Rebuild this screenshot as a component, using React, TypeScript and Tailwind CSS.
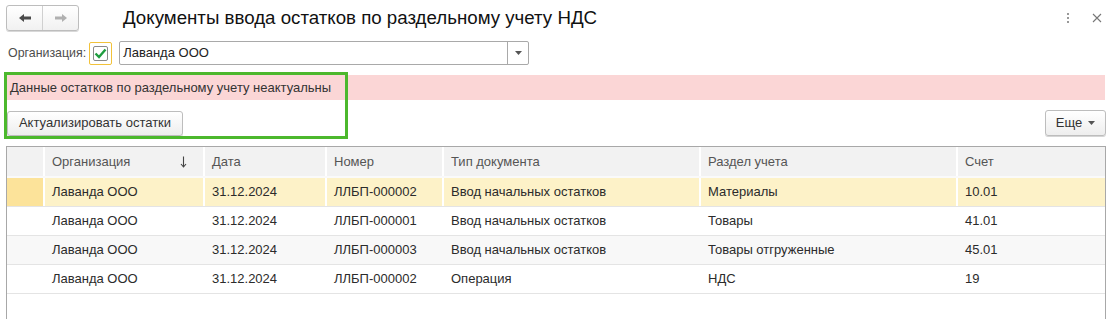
import React from "react"

const cols = [
  { title: "", w: "w-[36px]" },
  { title: "Организация", w: "w-[160px]", sort: true },
  { title: "Дата", w: "w-[122px]" },
  { title: "Номер", w: "w-[117px]" },
  { title: "Тип документа", w: "w-[257px]" },
  { title: "Раздел учета", w: "w-[257px]" },
  { title: "Счет", w: "w-[148px]" },
]

const rows = [
  ["Лаванда ООО", "31.12.2024", "ЛЛБП-000002", "Ввод начальных остатков", "Материалы", "10.01"],
  ["Лаванда ООО", "31.12.2024", "ЛЛБП-000001", "Ввод начальных остатков", "Товары", "41.01"],
  ["Лаванда ООО", "31.12.2024", "ЛЛБП-000003", "Ввод начальных остатков", "Товары отгруженные", "45.01"],
  ["Лаванда ООО", "31.12.2024", "ЛЛБП-000002", "Операция", "НДС", "19"],
]

function Arrow({ dir, color }: { dir: "left" | "right"; color: string }) {
  return (
    <svg width="14" height="10" viewBox="0 0 14 10">
      {dir === "left" ? (
        <path d="M1 5 L6 1 L6 3.6 L13 3.6 L13 6.4 L6 6.4 L6 9 Z" fill={color} />
      ) : (
        <path d="M13 5 L8 1 L8 3.6 L1 3.6 L1 6.4 L8 6.4 L8 9 Z" fill={color} />
      )}
    </svg>
  )
}

function Caret() {
  return (
    <svg width="7" height="4" viewBox="0 0 7 4">
      <path d="M0 0 L7 0 L3.5 4 Z" fill="#555" />
    </svg>
  )
}

export default function App() {
  return (
    <div className="relative w-[1110px] h-[319px] overflow-hidden bg-white font-['Liberation_Sans',Arial,sans-serif] text-[13px] text-[#333]">
      {/* top bar */}
      <div className="flex items-center pl-[6px] pt-[5px] h-[31px]">
        <div className="flex h-[26px] w-[73px] rounded-[3px] border border-[#bdbdbd] bg-gradient-to-b from-white to-[#f1f1f1] shadow-[0_1px_0_#d8d8d8]">
          <div className="flex flex-1 items-center justify-center border-r border-[#d0d0d0]">
            <Arrow dir="left" color="#4a4a4a" />
          </div>
          <div className="flex flex-1 items-center justify-center">
            <Arrow dir="right" color="#b0b0b0" />
          </div>
        </div>
        <div className="ml-[44px] text-[18.7px] leading-none text-[#111]">
          Документы ввода остатков по раздельному учету НДС
        </div>
        <div className="ml-auto mr-[8px] flex items-center gap-[23px]">
          <div className="flex flex-col gap-[1.5px]">
            <span className="block h-[2.5px] w-[2.5px] rounded-full bg-[#777]" />
            <span className="block h-[2.5px] w-[2.5px] rounded-full bg-[#777]" />
            <span className="block h-[2.5px] w-[2.5px] rounded-full bg-[#777]" />
          </div>
          <svg width="10" height="10" viewBox="0 0 10 10">
            <path d="M1 1 L9 9 M9 1 L1 9" stroke="#777" strokeWidth="1.1" />
          </svg>
        </div>
      </div>

      {/* organization row */}
      <div className="mt-[10px] flex items-center pl-[8px] h-[24px]">
        <span className="text-[12.4px] text-[#4d4d4d]">Организация:</span>
        <div className="ml-[3px] flex h-[23px] w-[23px] items-center justify-center rounded-[2px] border border-[#f2c23a]">
          <div className="flex h-[15px] w-[15px] items-center justify-center rounded-[2px] border border-[#8a8a8a] bg-white">
            <svg width="13" height="11" viewBox="0 0 13 11">
              <path d="M1.5 5.5 L5 9 L11.5 1.5" stroke="#1f9d3f" strokeWidth="2.4" fill="none" />
            </svg>
          </div>
        </div>
        <div className="ml-[7px] flex h-[24px] w-[410px] rounded-[2px] border border-[#a9a9a9] bg-white">
          <div className="flex flex-1 items-center pl-[3px] text-[13px] text-[#222]">Лаванда ООО</div>
          <div className="flex w-[21px] items-center justify-center border-l border-[#a9a9a9]">
            <Caret />
          </div>
        </div>
      </div>

      {/* warning bar */}
      <div className="mt-[10px] ml-[7px] flex h-[25px] w-[1098px] items-center bg-[#fbd6d6] pl-[3px] text-[#333]">
        Данные остатков по раздельному учету неактуальны
      </div>

      {/* buttons row */}
      <div className="mt-[10px] flex items-center justify-between pl-[7px] pr-[4px]">
        <button className="flex h-[25px] w-[176px] items-center justify-center rounded-[3px] border border-[#bdbdbd] bg-gradient-to-b from-white to-[#eeeeee] text-[13px] text-[#333] shadow-[0_1px_0_#d5d5d5]">
          Актуализировать остатки
        </button>
        <button className="flex h-[26px] w-[61px] items-center justify-center gap-[6px] rounded-[3px] border border-[#bdbdbd] bg-gradient-to-b from-white to-[#eeeeee] text-[13px] text-[#333] shadow-[0_1px_0_#d5d5d5]">
          Еще
          <Caret />
        </button>
      </div>

      {/* table */}
      <div className="mt-[10px] ml-[6px] w-[1100px] border border-b-0 border-[#a8a8a8] h-[200px]">
        <div className="flex h-[31px] bg-[#f2f2f2] border-b-[2px] border-[#fafafa] text-[#555]">
          {cols.map((c, i) => (
            <div
              key={i}
              className={`${c.w} flex items-center justify-between pl-[7px] pr-[16px] ${i > 0 ? "border-l-[2px] border-white" : ""}`}
            >
              <span>{c.title}</span>
              {c.sort && (
                <svg width="7" height="12" viewBox="0 0 7 12">
                  <path d="M3.5 0.5 L3.5 10.5 M1 8 L3.5 11 L6 8" stroke="#444" strokeWidth="1.1" fill="none" />
                </svg>
              )}
            </div>
          ))}
        </div>
        {rows.map((r, ri) => (
          <div
            key={ri}
            className={`flex h-[29px] border-b border-[#e4e4e4] text-[#2b2b2b] ${
              ri === 0 ? "bg-[#fdf2c8]" : ri === 2 ? "bg-[#f8f8f8]" : "bg-white"
            }`}
          >
            <div className={`${cols[0].w} ${ri === 0 ? "bg-[#fce39a]" : ""}`} />
            {r.map((v, ci) => (
              <div
                key={ci}
                className={`${cols[ci + 1].w} flex items-center pl-[7px] ${
                  ri === 0 ? "border-l-[2px] border-white" : "border-l-[2px] border-transparent"
                }`}
              >
                {v}
              </div>
            ))}
          </div>
        ))}
      </div>

      {/* highlight frame */}
      <div className="pointer-events-none absolute left-[4px] top-[72px] h-[67px] w-[344px] border-[3px] border-[#4cb82d]" />
    </div>
  )
}
